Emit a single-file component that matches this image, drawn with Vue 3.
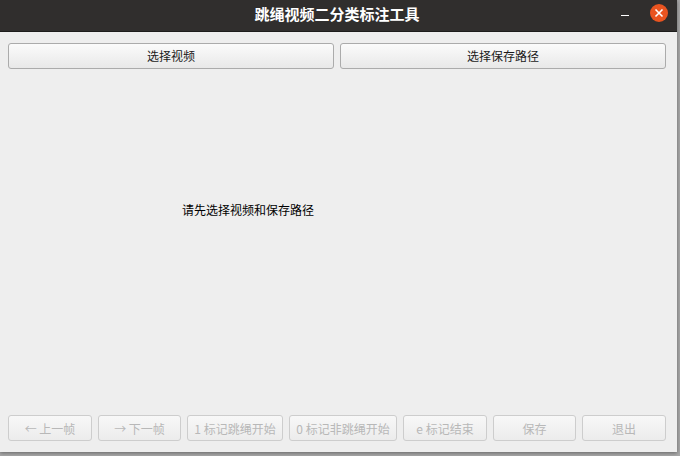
<script setup>
const bottom = [
  { t: '← 上一帧', w: 84 },
  { t: '→ 下一帧', w: 83 },
  { t: '1 标记跳绳开始', w: 96 },
  { t: '0 标记非跳绳开始', w: 108 },
  { t: 'e 标记结束', w: 84 },
  { t: '保存', w: 83 },
  { t: '退出', w: 84 },
]
</script>

<template>
  <div class="page">
    <div class="win">
      <header class="titlebar">
        <span class="title">跳绳视频二分类标注工具</span>
        <span class="min"></span>
        <span class="close">
          <svg width="10" height="10" viewBox="0 0 10 10"><path d="M1.5 1.5l7 7M8.5 1.5l-7 7" stroke="#fff" stroke-width="1.6" fill="none"/></svg>
        </span>
      </header>
      <div class="body">
        <div class="top">
          <button class="btn">选择视频</button>
          <button class="btn">选择保存路径</button>
        </div>
        <div class="center"><span class="msg">请先选择视频和保存路径</span></div>
        <div class="bottom">
          <button v-for="b in bottom" :key="b.t" class="btn off" :style="{ width: b.w + 'px' }">{{ b.t }}</button>
        </div>
      </div>
    </div>
  </div>
</template>

<style>
html, body { margin: 0; padding: 0; background: #a8a8a8; }
</style>

<style scoped>
.page {
  width: 680px; height: 456px; overflow: hidden;
  background: #a8a8a8;
  font-family: "Noto Sans CJK SC", "Noto Sans", sans-serif;
}
.win {
  width: 677px; height: 452px; background: #eeeeee;
  display: flex; flex-direction: column;
  box-shadow: 0 1px 4px rgba(0,0,0,.4);
}
.titlebar {
  height: 31px; flex: none; background: #302e2d; border-bottom: 1px solid #1d1c1b;
  position: relative; display: flex; align-items: center; justify-content: center;
}
.title { color: #fff; font-size: 15px; font-weight: 700; margin: -4px 3px 0 0; }
.min { position: absolute; left: 621px; top: 15px; width: 8px; height: 1px; background: #fff; }
.close {
  position: absolute; left: 650px; top: 4px; width: 18px; height: 18px; border-radius: 50%;
  background: #e95420; display: flex; align-items: center; justify-content: center;
}
.body { flex: 1; display: flex; flex-direction: column; padding: 11px 11px 11px 8px; min-height: 0; }
.top { display: flex; gap: 6px; }
.top .btn { flex: 1; height: 26px; padding-bottom: 2px; }
.center { flex: 1; padding: 127px 0 0 174px; }
.msg { font-size: 12px; color: #000; }
.bottom { display: flex; justify-content: space-between; }
.bottom .btn { height: 26px; }
.btn {
  box-sizing: border-box; margin: 0; padding: 0;
  border: 1px solid #ababab; border-radius: 3px;
  background: linear-gradient(#fbfbfb, #e8e8e8);
  font: inherit; font-size: 12px; color: #1a1a1a;
}
.btn.off { border-color: #cdcdcd; color: #b8b8b8; background: linear-gradient(#f8f8f8, #ececec); }
</style>
